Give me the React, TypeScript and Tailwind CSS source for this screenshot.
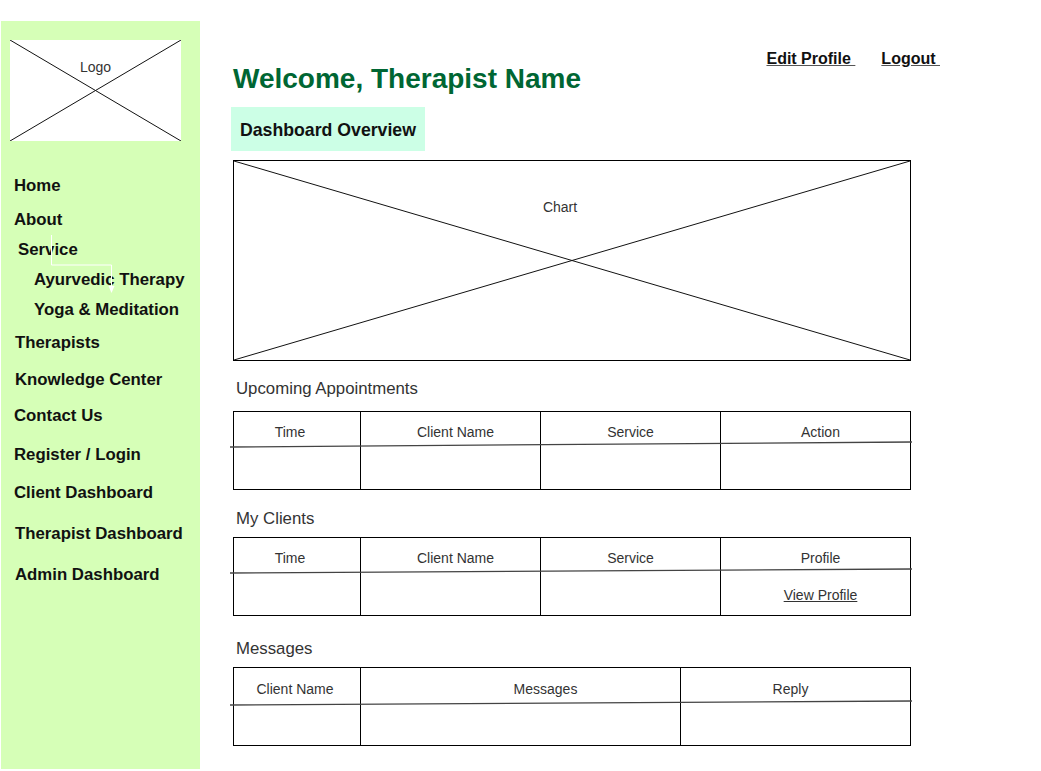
import React from 'react';

const navItems: { label: string; mt: string; ml: string }[] = [
  { label: 'Home', mt: 'mt-[35px]', ml: 'ml-[13px]' },
  { label: 'About', mt: 'mt-[14px]', ml: 'ml-[13px]' },
  { label: 'Service', mt: 'mt-[10px]', ml: 'ml-[17px]' },
  { label: 'Ayurvedic Therapy', mt: 'mt-[10px]', ml: 'ml-[33px]' },
  { label: 'Yoga & Meditation', mt: 'mt-[10px]', ml: 'ml-[33px]' },
  { label: 'Therapists', mt: 'mt-[13px]', ml: 'ml-[14px]' },
  { label: 'Knowledge Center', mt: 'mt-[17px]', ml: 'ml-[14px]' },
  { label: 'Contact Us', mt: 'mt-[16px]', ml: 'ml-[13px]' },
  { label: 'Register / Login', mt: 'mt-[19px]', ml: 'ml-[13px]' },
  { label: 'Client Dashboard', mt: 'mt-[18px]', ml: 'ml-[13px]' },
  { label: 'Therapist Dashboard', mt: 'mt-[21px]', ml: 'ml-[14px]' },
  { label: 'Admin Dashboard', mt: 'mt-[21px]', ml: 'ml-[14px]' },
];

function CrossLines() {
  return (
    <svg className="absolute inset-0 w-full h-full" preserveAspectRatio="none" viewBox="0 0 100 100">
      <line x1="0" y1="0" x2="100" y2="100" stroke="#111" strokeWidth="1" vectorEffect="non-scaling-stroke" />
      <line x1="0" y1="100" x2="100" y2="0" stroke="#111" strokeWidth="1" vectorEffect="non-scaling-stroke" />
    </svg>
  );
}

function Sidebar() {
  return (
    <aside className="relative mt-[21px] ml-[1px] w-[199px] h-[748px] bg-[#d6ffb7] flex flex-col shrink-0">
      <div className="relative mt-[19px] ml-[9px] w-[171px] h-[101px] bg-white">
        <CrossLines />
        <span className="absolute left-0 right-0 top-[18px] text-center text-[14px] leading-[18px] text-[#333]">Logo</span>
      </div>
      {navItems.map((n) => (
        <div key={n.label} className={`${n.mt} ${n.ml} h-[20px] leading-[20px] text-[16.8px] font-bold text-[#111] whitespace-nowrap relative`}>
          {n.label}
        </div>
      ))}
      <svg className="absolute left-0 top-0 w-[199px] h-[300px] pointer-events-none" viewBox="0 0 199 300">
        <path d="M50.5 214 V244 H110.5 V266" fill="none" stroke="#fff" strokeWidth="1" />
        <path d="M107.5 265 L113.5 265 L110.5 272 Z" fill="#fff" />
      </svg>
    </aside>
  );
}

type Col = { head: string; w: string; off?: string; body?: React.ReactNode };

function Table({ cols, y1, y2, headPt = 'pt-[11px]' }: { cols: Col[]; y1: number; y2: number; headPt?: string }) {
  return (
    <div className="relative w-[678px] h-[79px] border border-black flex">
      {cols.map((c, i) => (
        <div key={c.head} className={`${c.w} flex flex-col ${i < cols.length - 1 ? 'border-r border-black' : ''}`}>
          <div className={`${headPt} h-[35px] text-center text-[14px] leading-[18px] text-[#333] ${c.off ?? ''}`}>{c.head}</div>
          {c.body && <div className={`pt-[13px] text-center text-[14px] leading-[18px] ${c.off ?? ''}`}>{c.body}</div>}
        </div>
      ))}
      <svg className="absolute left-[-4px] top-[-1px] w-[682px] h-[79px] overflow-visible pointer-events-none" viewBox="0 0 682 79">
        <line x1="0" y1={y1} x2="682" y2={y2} stroke="#444" strokeWidth="1.3" />
      </svg>
    </div>
  );
}

export default function App() {
  return (
    <div className="w-[1041px] h-[771px] bg-white flex overflow-hidden" style={{ fontFamily: '"Liberation Sans", Arial, sans-serif' }}>
      <Sidebar />
      <main className="ml-[33px] flex flex-col">
        <div className="w-[707px] flex items-start">
          <h1 className="mt-[63px] text-[28px] leading-[32px] font-bold text-[#006633] whitespace-nowrap">Welcome, Therapist Name</h1>
          <div className="ml-auto mt-[50px] flex gap-[26px] text-[16px] leading-[18px] font-bold text-[#111]">
            <a className="underline whitespace-pre decoration-[#555]">Edit Profile </a>
            <a className="underline whitespace-pre decoration-[#555]">Logout </a>
          </div>
        </div>

        <div className="mt-[12px] ml-[-2px] w-[194px] h-[44px] bg-[#ccffe6] pl-[9px] pt-[3px] flex items-center">
          <span className="text-[17.7px] font-bold text-[#111] whitespace-nowrap">Dashboard Overview</span>
        </div>

        <div className="relative mt-[9px] w-[678px] h-[201px] border border-black">
          <CrossLines />
          <span className="absolute left-0 right-[24px] top-[37px] text-center text-[14px] leading-[18px] text-[#333]">Chart</span>
        </div>

        <h2 className="mt-[18px] ml-[3px] text-[16.8px] leading-[20px] text-[#333]">Upcoming Appointments</h2>
        <div className="mt-[12px]">
          <Table
            y1={36}
            y2={31}
            cols={[
              { head: 'Time', w: 'w-[127px]', off: 'pr-[14px]' },
              { head: 'Client Name', w: 'w-[180px]', off: 'pl-[10px]' },
              { head: 'Service', w: 'w-[180px]' },
              { head: 'Action', w: 'flex-1', off: 'pl-[10px]' },
            ]}
          />
        </div>

        <h2 className="mt-[19px] ml-[3px] text-[16.8px] leading-[20px] text-[#333]">My Clients</h2>
        <div className="mt-[8px]">
          <Table
            y1={36}
            y2={32}
            cols={[
              { head: 'Time', w: 'w-[127px]', off: 'pr-[14px]' },
              { head: 'Client Name', w: 'w-[180px]', off: 'pl-[10px]' },
              { head: 'Service', w: 'w-[180px]' },
              { head: 'Profile', w: 'flex-1', off: 'pl-[10px]', body: <span className="underline text-[#333]">View Profile</span> },
            ]}
          />
        </div>

        <h2 className="mt-[23px] ml-[3px] text-[16.8px] leading-[20px] text-[#333]">Messages</h2>
        <div className="mt-[8px]">
          <Table
            y1={38}
            y2={34}
            headPt="pt-[12px]"
            cols={[
              { head: 'Client Name', w: 'w-[127px]', off: 'pr-[4px]' },
              { head: 'Messages', w: 'w-[320px]', off: 'pl-[50px]' },
              { head: 'Reply', w: 'flex-1', off: 'pr-[10px]' },
            ]}
          />
        </div>
      </main>
    </div>
  );
}
